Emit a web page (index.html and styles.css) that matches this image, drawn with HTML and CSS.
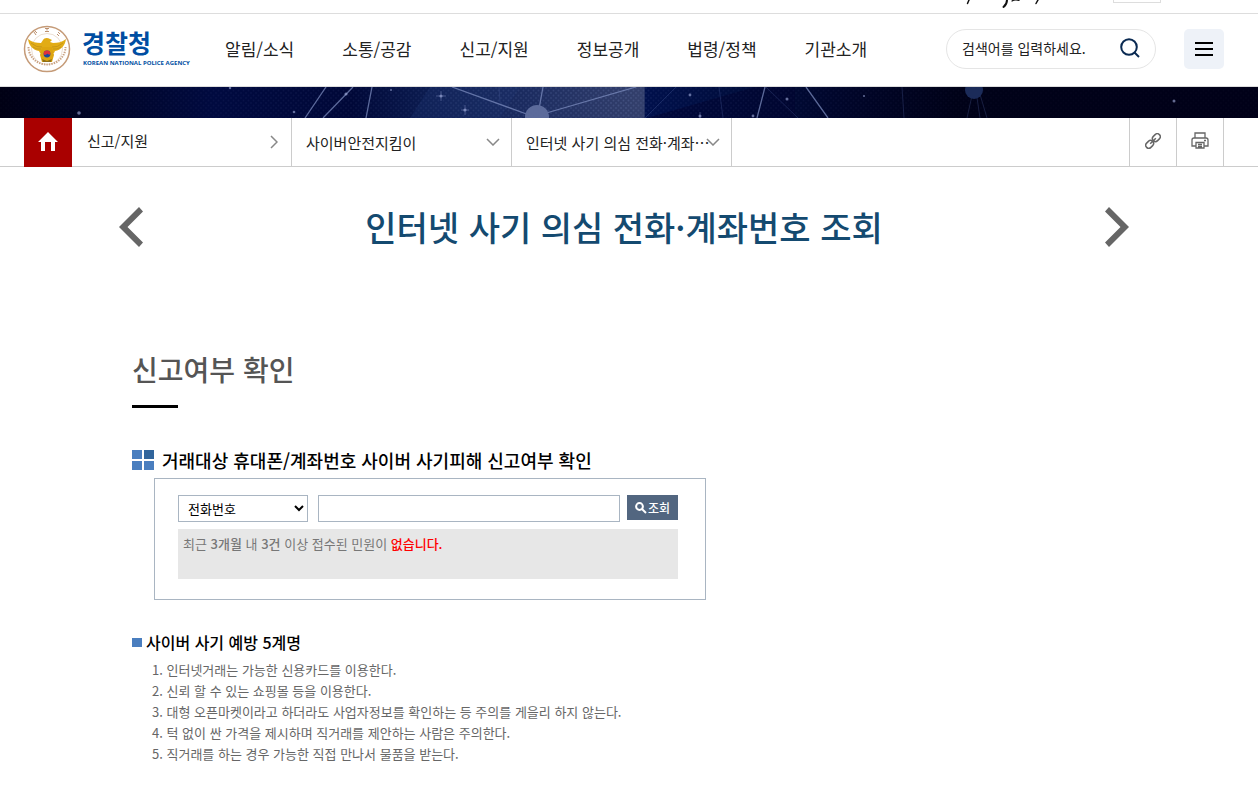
FILE: index.html
```html
<!DOCTYPE html>
<html lang="ko">
<head>
<meta charset="utf-8">
<title>경찰청 - 인터넷 사기 의심 전화·계좌번호 조회</title>
<link rel="stylesheet" href="styles.css">
</head>
<body>
<div class="topbar">
  <svg class="signature" width="76" height="13" viewBox="0 0 76 13" aria-hidden="true" fill="none" stroke="#111" stroke-linecap="round">
    <path d="M4 0 2.500 3.500" stroke-width="1.500"/><path d="M42 0C42 3 41 5 38.500 7" stroke-width="2"/><path d="M47 1Q50-1 54 .5" stroke-width="1.200"/><path d="M73 0 71 3.500" stroke-width="1.500"/>
  </svg>
  <span class="topbox"></span>
</div>
<header class="header">
  <a class="logo" href="#">
    <svg class="emblem" width="48" height="48" viewBox="0 0 48 48" aria-hidden="true">
      <circle cx="24" cy="24" r="22.500" fill="#fff" stroke="#c59b78" stroke-width="1.500"/>
      <circle cx="24" cy="24" r="15.500" fill="none" stroke="#e6d5c6" stroke-width=".8"/>
      <path d="M5.500 22a18.500 17.500 0 0 0 37 0" fill="none" stroke="#c9a283" stroke-width="2" stroke-dasharray="1.400 1.100"/>
      <g fill="none" stroke="#b48560" stroke-width=".9"><path d="M11 7l2 3m-1-4 2 2M22 3.500h4m-2 0v2m-2 1h4M35 7l2 2m-3 0 2 2"/></g>
      <path d="M5 14c4 3 8 4 13 4l2-3c1-2 4-3 7-1l2 1-2 2 3 1c5 0 9-1 13-4-1 7-5 11-11 12l-1 2H17l-1-2C10 25 6 21 5 14z" fill="#e2ac15"/>
      <path d="M8 18q6 5 11 4m-9 0q4 3 8 2M40 18q-6 5-11 4m9 0q-4 3-8 2" fill="none" stroke="#b98c1a" stroke-width=".7"/>
      <path d="M19 22h10l2 8-2 7H19l-2-7z" fill="#dda510"/>
      <path d="M19 34l5 2 5-2-1 3h-8z" fill="#907018"/>
      <circle cx="24" cy="29" r="3.400" fill="#174ba0"/>
      <path d="M20.600 29a3.400 3.400 0 0 1 6.800 0c-1.500 2-2.400-.8-3.400 0s-2.400 1.500-3.400 0z" fill="#e0303c"/>
    </svg>
    <span class="logo-text"><strong>경찰청</strong><small>KOREAN NATIONAL POLICE AGENCY</small></span>
  </a>
  <nav class="gnb">
    <a href="#">알림/소식</a><a href="#">소통/공감</a><a href="#">신고/지원</a><a href="#">정보공개</a><a href="#">법령/정책</a><a href="#">기관소개</a>
  </nav>
  <form class="search">
    <input type="text" aria-label="검색어" placeholder="검색어를 입력하세요.">
    <button type="button" aria-label="검색"><svg width="20" height="20" viewBox="0 0 20 20" fill="none" stroke="#0a2a52" stroke-width="2"><circle cx="9" cy="9" r="7.800"/><path d="M14.500 14.500 19 19"/></svg></button>
  </form>
  <button class="menu" type="button" aria-label="전체메뉴"><svg width="18" height="14" viewBox="0 0 18 14" fill="#000"><path d="M0 0h18v2H0zM0 6h18v2H0zM0 12h18v2H0z"/></svg></button>
</header>
<svg class="banner" viewBox="0 0 1258 31" preserveAspectRatio="xMidYMid slice" aria-hidden="true">
  <defs>
    <linearGradient id="sky">
      <stop offset="0" stop-color="#000014"/><stop offset=".08" stop-color="#000526"/><stop offset=".17" stop-color="#000a40"/><stop offset=".28" stop-color="#000838"/><stop offset=".34" stop-color="#0c1c50"/><stop offset=".42" stop-color="#1c2c60"/><stop offset=".512" stop-color="#34406c"/><stop offset=".513" stop-color="#00104c"/><stop offset=".6" stop-color="#000d3a"/><stop offset=".66" stop-color="#00062c"/><stop offset=".76" stop-color="#000218"/><stop offset="1" stop-color="#000018"/>
    </linearGradient>
    <pattern id="mesh" width="5" height="5" patternUnits="userSpaceOnUse"><circle cx="1" cy="1" r=".9" fill="#8ba0d8" opacity=".2"/><circle cx="3.500" cy="3.500" r=".9" fill="#8ba0d8" opacity=".2"/></pattern>
    <linearGradient id="fade"><stop offset="0" stop-color="#fff" stop-opacity=".12"/><stop offset=".33" stop-color="#fff" stop-opacity=".45"/><stop offset=".5" stop-color="#fff"/><stop offset=".52" stop-color="#fff" stop-opacity=".4"/><stop offset=".8" stop-color="#fff" stop-opacity=".15"/></linearGradient>
    <mask id="soft"><path d="M0 0h1258v31H0z" fill="url(#fade)"/></mask>
  </defs>
  <path d="M0 0h1258v31H0z" fill="url(#sky)"/>
  <path d="M647 31 755 0h40v31z" fill="#000430" opacity=".55"/>
  <path d="M410 31 430 0h90l-20 31z" fill="#1d3470" opacity=".3"/>
  <path d="M0 0h1258v31H0z" fill="url(#mesh)" mask="url(#soft)"/>
  <g stroke="#8292c4" stroke-width="1.300" opacity=".7"><path d="M326 0 305 31M353 0 323 31M372 0 366 31M452 0 532 29M543 0 539 22M636 0 536 29M765 0 757 31M806 0 828 31"/></g>
  <g stroke="#5468a8" stroke-width=".8" opacity=".35"><path d="M499 0 500 15M645 31 676 0M719 0 723 31M766 0 798 31M902 0 904 31M973 4 967 31M976 4 980 31M979 4 987 31"/></g>
  <circle cx="537" cy="30" r="12" fill="#5c6b9b"/><circle cx="974" cy="3" r="9" fill="#1b2b59"/>
  <g fill="#a5b0df" opacity=".6"><circle cx="79" cy="26" r="1.800"/><circle cx="230" cy="1" r="1.200"/><circle cx="294" cy="25" r="1.300"/><circle cx="346" cy="7" r="1.600"/><circle cx="391" cy="3" r="1"/><circle cx="441" cy="9" r="1.600"/><circle cx="465" cy="23" r="1.600"/><circle cx="690" cy="8" r="1.400"/><circle cx="700" cy="29" r="1.500"/><circle cx="753" cy="29" r="1.400"/><circle cx="787" cy="12" r="1.500"/><circle cx="864" cy="9" r="1"/><circle cx="1174" cy="14" r="1.500"/></g>
  <path d="M441 4v10m-5-5h10M465 18v10m-4-5h8M700 25v6" stroke="#a5b0df" stroke-width=".7" opacity=".5"/>
</svg>
<nav class="crumbs" aria-label="현재 위치">
  <a class="home" href="#" aria-label="홈"><svg width="20" height="19" viewBox="0 0 20 19" fill="#fff"><path d="M10 0 20 10h-3v9h-4v-9H7v9H3v-9H0z"/></svg></a>
  <a class="crumb parent" href="#"><span>신고/지원</span><svg width="8" height="14" viewBox="0 0 8 14"><path d="M1 1l6 6-6 6"/></svg></a>
  <button class="crumb" type="button"><span>사이버안전지킴이</span><svg width="14" height="8" viewBox="0 0 14 8"><path d="M1 1l6 6 6-6"/></svg></button>
  <button class="crumb" type="button"><span>인터넷 사기 의심 전화·계좌⋯</span><svg width="14" height="8" viewBox="0 0 14 8"><path d="M1 1l6 6 6-6"/></svg></button>
  <div class="tools">
    <button type="button" aria-label="주소 복사"><svg width="16" height="16" viewBox="0 0 16 16" fill="none" stroke="#666" stroke-width="1.500"><g transform="rotate(-45 8 8)"><rect x="-1" y="5" width="8.500" height="6" rx="3"/><rect x="8.500" y="5" width="8.500" height="6" rx="3"/><path d="M4 8h8"/></g></svg></button>
    <button type="button" aria-label="인쇄"><svg width="18" height="17" viewBox="0 0 18 17" fill="none" stroke="#666" stroke-width="1.300"><path d="M4 6V1h10v5M4.500 14H1V8q0-2 2-2h12q2 0 2 2v6h-3.500M5 10.500h8V16H5zM7 12.500h4M7 14.500h4M13 8.500h2"/></svg></button>
  </div>
</nav>
<main>
  <div class="page-title">
    <button type="button" aria-label="이전"><svg width="24" height="40" viewBox="0 0 24 40"><path d="M20 0 24 4.500 8.500 20 24 35.500 20 40 0 20z"/></svg></button>
    <h1>인터넷 사기 의심 전화·계좌번호 조회</h1>
    <button type="button" aria-label="다음"><svg width="24" height="40" viewBox="0 0 24 40"><path d="M4 0 0 4.500 15.500 20 0 35.500 4 40 24 20z"/></svg></button>
  </div>
  <div class="content">
    <h2>신고여부 확인</h2>
    <h3><svg width="22" height="20" viewBox="0 0 22 20" aria-hidden="true"><path d="M0 0h10v9H0zM0 11h10v9H0zM12 11h10v9H12z" fill="#4a7ebf"/><path d="M12 0h10v9H12z" fill="#31659c"/></svg>거래대상 휴대폰/계좌번호 사이버 사기피해 신고여부 확인</h3>
    <form class="lookup">
      <div class="fields">
        <select aria-label="조회 구분"><option>전화번호</option><option>계좌번호</option></select>
        <input type="text" aria-label="조회할 번호">
        <button type="button"><svg width="12" height="12" viewBox="0 0 12 12" fill="none" stroke="#fff" stroke-width="2" aria-hidden="true"><circle cx="4.500" cy="4.500" r="3.400"/><path d="M7 7l4 4"/></svg>조회</button>
      </div>
      <p class="result">최근 <b>3개월</b> 내 <b>3건</b> 이상 접수된 민원이 <b class="none">없습니다.</b></p>
    </form>
    <h4>사이버 사기 예방 5계명</h4>
    <ol>
      <li>인터넷거래는 가능한 신용카드를 이용한다.</li>
      <li>신뢰 할 수 있는 쇼핑몰 등을 이용한다.</li>
      <li>대형 오픈마켓이라고 하더라도 사업자정보를 확인하는 등 주의를 게을리 하지 않는다.</li>
      <li>턱 없이 싼 가격을 제시하며 직거래를 제안하는 사람은 주의한다.</li>
      <li>직거래를 하는 경우 가능한 직접 만나서 물품을 받는다.</li>
    </ol>
  </div>
</main>
</body>
</html>
```
FILE: styles.css
```css
* { box-sizing: border-box; }
body { margin: 0; background: #fff; color: #222; font-family: "Noto Sans CJK KR", sans-serif; font-size: 15px; }
a { color: inherit; text-decoration: none; }
button, input, select { font: inherit; color: inherit; margin: 0; }
button { padding: 0; border: 0; background: none; cursor: pointer; }
svg { display: block; flex: none; }
h1, h2, h3, h4, p, ol { margin: 0; padding: 0; }

.topbar { display: flex; justify-content: flex-end; gap: 72px; height: 14px; padding-right: 97px; border-bottom: 1px solid #ddd; }
.topbox { width: 48px; height: 3px; border: 1px solid #ddd; border-top: 0; }

.header { display: flex; align-items: center; height: 73px; padding: 0 34px 2px 23px; border-bottom: 1px solid #ddd; }
.logo { display: flex; align-items: center; gap: 11px; width: 202px; color: #004ea2; }
.logo-text { display: flex; flex-direction: column; }
.logo-text strong { font-size: 25px; line-height: 28px; font-weight: 700; }
.logo-text small { padding-left: 1px; font: bold 6px/14px "Open Sans", sans-serif; white-space: nowrap; }
.gnb { display: flex; gap: 48px; font-size: 17px; line-height: 24px; white-space: nowrap; }
.search { display: flex; align-items: center; width: 210px; height: 40px; margin-left: auto; padding: 0 15px 2px; border: 1px solid #e5e5e5; border-radius: 20px; }
.search input { flex: 1; min-width: 0; padding: 0; border: 0; outline: 0; font-size: 14px; }
.search input::placeholder { color: #222; opacity: 1; }
.menu { display: grid; place-items: center; width: 40px; height: 40px; margin-left: 28px; border-radius: 5px; background: #eef2f8; }

.banner { width: 100%; height: 31px; }

.crumbs { display: flex; height: 49px; padding: 0 34px 0 24px; border-bottom: 1px solid #ccc; }
.home { display: grid; place-items: center; width: 48px; height: 49px; padding-bottom: 3px; background: #a90000; }
.crumb { display: flex; align-items: center; justify-content: space-between; width: 220px; padding: 0 11px 0 14px; border-right: 1px solid #ccc; white-space: nowrap; }
.crumb.parent { padding: 0 13px 0 15px; }
.crumb.parent span { padding-bottom: 3px; }
.crumb span { width: 0; }
.crumb svg { fill: none; stroke: #888; stroke-width: 1.5; }
.tools { display: flex; margin-left: auto; border-left: 1px solid #ccc; }
.tools button { display: grid; place-items: center; width: 47px; padding-bottom: 3px; border-right: 1px solid #ccc; }

.page-title { display: flex; align-items: center; justify-content: space-between; padding: 35px 129px 0 119px; fill: #666; }
h1 { color: #144a70; font-size: 34px; line-height: 50px; font-weight: 500; }

.content { padding: 97px 132px 24px; }
h2 { color: #555; font-size: 28px; line-height: 40px; font-weight: 500; }
h2::after { content: ""; display: block; width: 46px; height: 3px; margin-top: 16px; background: #000; }
h3 { display: flex; align-items: center; gap: 8px; margin-top: 38px; color: #000; font-size: 18px; line-height: 28px; font-weight: 500; }
.lookup { max-width: 552px; margin: 4px 0 0 22px; padding: 16px 27px 20px 23px; border: 1px solid #a9b5c2; }
.fields { display: flex; }
.fields select { width: 130px; height: 27px; padding: 0 0 0 5px; border: 1px solid #a9b5c2; background: #fff; color: #000; font-size: 13px; }
.fields input { flex: 1; min-width: 0; height: 27px; margin: 0 7px 0 10px; padding: 0 6px; border: 1px solid #a9b5c2; }
.fields button { display: flex; align-items: center; justify-content: center; gap: 1px; width: 51px; height: 25px; background: #526680; color: #fff; font-size: 12px; font-weight: 500; }
.result { min-height: 50px; margin-top: 7px; padding: 5px; background: #e7e7e7; color: #777; font-size: 13px; line-height: 20px; }
.result b { font-weight: 500; }
.result .none { color: #f00; }
h4 { display: flex; align-items: center; gap: 4px; margin-top: 30px; color: #000; font-size: 16px; line-height: 24px; font-weight: 500; }
h4::before { content: ""; width: 10px; height: 9px; background: #4a7ebf; }
ol { margin-top: 5px; padding-left: 20px; list-style-position: inside; color: #666; font-size: 13px; line-height: 21px; }
```
